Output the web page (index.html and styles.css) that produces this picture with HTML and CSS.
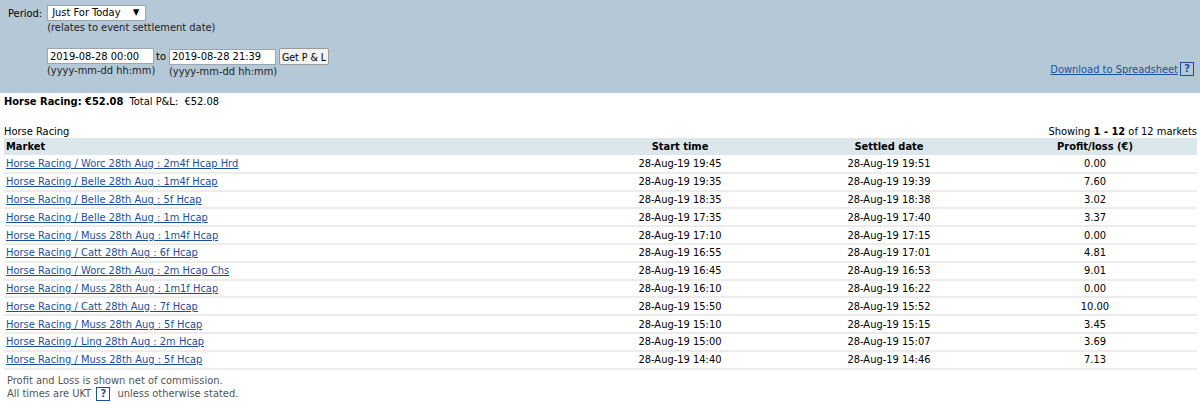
FILE: index.html
```html
<!DOCTYPE html>
<html lang="en">
<head>
  <meta charset="UTF-8" />
  <title>Profit and Loss</title>
  <link rel="stylesheet" href="styles.css">
</head>
<body>
  <div class="filtro">
    <div class="periodo">
      <label>Period:</label>
      <div>
        <div class="select">Just For Today <span class="seta">&#9660;</span></div>
        <div class="nota">(relates to event settlement date)</div>
      </div>
    </div>
    <div class="datas">
      <div class="campo">
        <div class="linha">
          <input type="text" value="2019-08-28 00:00" />
          <span class="ate">to</span>
        </div>
        <div class="nota">(yyyy-mm-dd hh:mm)</div>
      </div>
      <div class="campo">
        <div class="linha">
          <input type="text" value="2019-08-28 21:39" />
          <button>Get P &amp; L</button>
        </div>
        <div class="nota">(yyyy-mm-dd hh:mm)</div>
      </div>
      <div class="download">
        <a href="#">Download to Spreadsheet </a><span class="ajuda">?</span>
      </div>
    </div>
  </div>

  <div class="resumo"><b>Horse Racing: €52.08</b>&nbsp; Total P&amp;L: &nbsp;€52.08</div>

  <div class="titulo">
    <span>Horse Racing</span>
    <span>Showing <b>1 - 12</b> of 12 markets</span>
  </div>

  <table>
    <thead>
      <tr>
        <th class="mercado">Market</th>
        <th class="inicio">Start time</th>
        <th class="liquidado">Settled date</th>
        <th>Profit/loss (€)</th>
      </tr>
    </thead>
    <tbody id="linhas"></tbody>
  </table>

  <div class="rodape">
    <div>Profit and Loss is shown net of commission.</div>
    <div>All times are UKT <span class="ajuda">?</span> unless otherwise stated.</div>
  </div>

  <script>
    const mercados = [
      ['Worc 28th Aug : 2m4f Hcap Hrd', '19:45', '19:51', '0.00'],
      ['Belle 28th Aug : 1m4f Hcap', '19:35', '19:39', '7.60'],
      ['Belle 28th Aug : 5f Hcap', '18:35', '18:38', '3.02'],
      ['Belle 28th Aug : 1m Hcap', '17:35', '17:40', '3.37'],
      ['Muss 28th Aug : 1m4f Hcap', '17:10', '17:15', '0.00'],
      ['Catt 28th Aug : 6f Hcap', '16:55', '17:01', '4.81'],
      ['Worc 28th Aug : 2m Hcap Chs', '16:45', '16:53', '9.01'],
      ['Muss 28th Aug : 1m1f Hcap', '16:10', '16:22', '0.00'],
      ['Catt 28th Aug : 7f Hcap', '15:50', '15:52', '10.00'],
      ['Muss 28th Aug : 5f Hcap', '15:10', '15:15', '3.45'],
      ['Ling 28th Aug : 2m Hcap', '15:00', '15:07', '3.69'],
      ['Muss 28th Aug : 5f Hcap', '14:40', '14:46', '7.13']
    ];

    const corpo = document.getElementById('linhas');
    mercados.forEach(m => {
      const tr = document.createElement('tr');
      tr.innerHTML =
        `<td class="mercado"><a href="#">Horse Racing / ${m[0]}</a></td>` +
        `<td>28-Aug-19 ${m[1]}</td>` +
        `<td>28-Aug-19 ${m[2]}</td>` +
        `<td>${m[3]}</td>`;
      corpo.appendChild(tr);
    });
  </script>
</body>
</html>
```

FILE: styles.css
```css
* {
  box-sizing: border-box;
}

body {
  margin: 0;
  font-family: "DejaVu Sans Condensed", "DejaVu Sans", sans-serif;
  font-size: 11px;
  color: #000;
  background: #fff;
}

a {
  color: #1b4f9c;
}

.filtro {
  background: #b4c8d8;
  height: 93px;
  padding: 5px 6px 0 8px;
}

.periodo {
  display: flex;
  gap: 5px;
}

.periodo label {
  padding-top: 2px;
}

.select {
  width: 99px;
  height: 16px;
  background: #fff;
  border: 1px solid #9aa6b0;
  padding: 0 4px;
  position: relative;
}

.seta {
  position: absolute;
  right: 6px;
  top: 1px;
  font-size: 9px;
}

.nota {
  color: #222;
}

.datas {
  display: flex;
  align-items: flex-start;
  margin-top: 14px;
  padding-left: 39px;
}

.campo + .campo {
  margin-left: 3px;
}

.linha {
  display: flex;
  align-items: center;
}

.linha input {
  width: 107px;
  height: 16px;
  border: 1px solid #9aa6b0;
  padding: 0 2px;
  font: inherit;
}

.ate {
  margin-left: 2px;
}

button {
  margin-left: 3px;
  height: 17px;
  font: inherit;
  font-size: 10.5px;
  padding: 0 2px;
  background: #f2f2f2;
  border: 1px solid #9a9a9a;
  border-radius: 2px;
}

.download {
  margin-left: auto;
  margin-top: 14px;
  display: flex;
  align-items: center;
}

.ajuda {
  display: inline-block;
  width: 14px;
  height: 14px;
  border: 1px solid #1b4f9c;
  color: #1b4f9c;
  font-weight: bold;
  text-align: center;
  line-height: 12px;
  margin-left: 2px;
  background: #fff;
}

.download .ajuda {
  background: transparent;
}

.resumo {
  padding: 2px 4px;
}

.titulo {
  display: flex;
  justify-content: space-between;
  margin-top: 15px;
  padding: 0 3px 0 4px;
}

table {
  width: calc(100% - 7px);
  margin-left: 4px;
  border-collapse: collapse;
}

th {
  background: #dbe7eb;
  height: 17px;
  font-weight: bold;
  padding: 0;
}

td {
  height: 17.8px;
  border-bottom: 2px solid #ececec;
  text-align: center;
  padding: 0;
}

th.mercado,
td.mercado {
  text-align: left;
  width: 571px;
  padding-left: 2px;
}

th.inicio {
  width: 210px;
}

th.liquidado {
  width: 208px;
}

.rodape {
  color: #555;
  padding: 4px 7px;
  line-height: 13px;
}

.rodape .ajuda {
  margin: 0 4px 0 2px;
}
```
